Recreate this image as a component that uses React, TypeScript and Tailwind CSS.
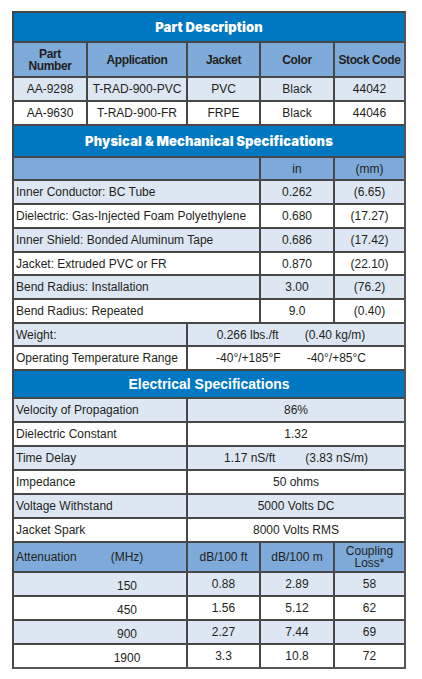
import React from 'react';

const line = 'border-[#474747]';

type Tone = 'light' | 'white' | 'mid';

const toneBg: Record<Tone, string> = {
    light: 'bg-[#dde7f4]',
    white: 'bg-white',
    mid: 'bg-[#7eaada]',
};

function Row({ cols, tone, h = 'h-[24px]', children }: { cols: string; tone: Tone; h?: string; children: React.ReactNode }) {
    return <div className={`grid ${cols} ${h} ${toneBg[tone]} border-t-2 ${line}`}>{children}</div>;
}

function Cell({ first, left, children, className = '' }: { first?: boolean; left?: boolean; children?: React.ReactNode; className?: string }) {
    return (
        <div
            className={`flex items-center ${left ? 'justify-start pl-[2px]' : 'justify-center text-center'} ${first ? '' : `border-l-2 ${line}`} ${className}`}
        >
            {children}
        </div>
    );
}

function SectionTitle({ children, heavy, h }: { children: React.ReactNode; heavy?: boolean; h: string }) {
    return (
        <div
            className={`${h} bg-[#0078c1] flex items-center justify-center text-white ${
                heavy ? "font-['Inter',sans-serif] font-black text-[13px] tracking-[0.1px]" : 'font-bold text-[14px]'
            }`}
        >
            {children}
        </div>
    );
}

const partCols = 'grid-cols-[72px_100px_73px_74px_1fr]';
const physCols = 'grid-cols-[245px_74px_1fr]';
const twoCols = 'grid-cols-[172px_1fr]';
const attCols = 'grid-cols-[172px_73px_74px_1fr]';

// label, in, mm, row height
const physRows: [string, string, string, string][] = [
    ['Inner Conductor: BC Tube', '0.262', '(6.65)', 'h-[24px]'],
    ['Dielectric: Gas-Injected Foam Polyethylene', '0.680', '(17.27)', 'h-[24px]'],
    ['Inner Shield: Bonded Aluminum Tape', '0.686', '(17.42)', 'h-[24px]'],
    ['Jacket: Extruded PVC or FR', '0.870', '(22.10)', 'h-[23px]'],
    ['Bend Radius: Installation', '3.00', '(76.2)', 'h-[24px]'],
    ['Bend Radius: Repeated', '9.0', '(0.40)', 'h-[24px]'],
];

const elecRows: [string, React.ReactNode][] = [
    ['Velocity of Propagation', '86%'],
    ['Dielectric Constant', '1.32'],
    [
        'Time Delay',
        <span className="flex gap-[30px]">
            <span>1.17 nS/ft</span>
            <span>(3.83 nS/m)</span>
        </span>,
    ],
    ['Impedance', '50 ohms'],
    ['Voltage Withstand', '5000 Volts DC'],
    ['Jacket Spark', '8000 Volts RMS'],
];

const attRows = [
    ['150', '0.88', '2.89', '58'],
    ['450', '1.56', '5.12', '62'],
    ['900', '2.27', '7.44', '69'],
    ['1900', '3.3', '10.8', '72'],
];

export default function App() {
    return (
        <div className="min-h-screen bg-white pt-[11px] pl-[12px] font-['Liberation_Sans',Arial,sans-serif] text-[12px] text-[#231f20] leading-none">
            <div className={`w-[394px] border-2 ${line} border-r-[#555] border-b-[#555]`}>
                {/* Part description */}
                <SectionTitle heavy h="h-[28px]">Part Description</SectionTitle>
                <Row cols={partCols} tone="mid" h="h-[35px]">
                    <Cell first className="font-bold tracking-[-0.4px] leading-[12px]">
                        Part
                        <br />
                        Number
                    </Cell>
                    <Cell className="font-bold tracking-[-0.4px]">Application</Cell>
                    <Cell className="font-bold tracking-[-0.4px]">Jacket</Cell>
                    <Cell className="font-bold tracking-[-0.4px]">Color</Cell>
                    <Cell className="font-bold tracking-[-0.4px]">Stock Code</Cell>
                </Row>
                <Row cols={partCols} tone="light">
                    <Cell first>AA-9298</Cell>
                    <Cell>T-RAD-900-PVC</Cell>
                    <Cell>PVC</Cell>
                    <Cell>Black</Cell>
                    <Cell>44042</Cell>
                </Row>
                <Row cols={partCols} tone="white">
                    <Cell first>AA-9630</Cell>
                    <Cell>T-RAD-900-FR</Cell>
                    <Cell>FRPE</Cell>
                    <Cell>Black</Cell>
                    <Cell>44046</Cell>
                </Row>

                {/* Physical & mechanical */}
                <div className={`border-t-2 ${line}`}>
                    <SectionTitle heavy h="h-[30px]">Physical &amp; Mechanical Specifications</SectionTitle>
                </div>
                <Row cols={physCols} tone="mid" h="h-[23px]">
                    <Cell first />
                    <Cell>in</Cell>
                    <Cell>(mm)</Cell>
                </Row>
                {physRows.map(([label, inch, mm, h], i) => (
                    <Row key={label} cols={physCols} tone={i % 2 === 0 ? 'light' : 'white'} h={h}>
                        <Cell first left>{label}</Cell>
                        <Cell>{inch}</Cell>
                        <Cell>{mm}</Cell>
                    </Row>
                ))}
                <Row cols={twoCols} tone="light" h="h-[23px]">
                    <Cell first left>Weight:</Cell>
                    <Cell>
                        <span className="flex gap-[26px] pr-[10px]">
                            <span>0.266 lbs./ft</span>
                            <span>(0.40 kg/m)</span>
                        </span>
                    </Cell>
                </Row>
                <Row cols={twoCols} tone="white">
                    <Cell first left>Operating Temperature Range</Cell>
                    <Cell>
                        <span className="flex gap-[26px] pr-[10px]">
                            <span>-40°/+185°F</span>
                            <span>-40°/+85°C</span>
                        </span>
                    </Cell>
                </Row>

                {/* Electrical */}
                <div className={`border-t-2 ${line}`}>
                    <SectionTitle h="h-[26px]">Electrical Specifications</SectionTitle>
                </div>
                {elecRows.map(([label, value], i) => (
                    <Row key={label} cols={twoCols} tone={i % 2 === 0 ? 'light' : 'white'}>
                        <Cell first left>{label}</Cell>
                        <Cell>{value}</Cell>
                    </Row>
                ))}
                <Row cols={attCols} tone="mid" h="h-[30px]">
                    <Cell first left>
                        <span className="w-[82px]">Attenuation</span>
                        <span className="w-[58px] text-center">(MHz)</span>
                    </Cell>
                    <Cell>dB/100 ft</Cell>
                    <Cell>dB/100 m</Cell>
                    <Cell className="leading-[12px]">
                        Coupling
                        <br />
                        Loss*
                    </Cell>
                </Row>
                {attRows.map(([mhz, ft, m, loss], i) => (
                    <Row key={mhz} cols={attCols} tone={i % 2 === 0 ? 'light' : 'white'}>
                        <Cell first left>
                            <span className="w-[82px]" />
                            <span className="w-[58px] text-center pt-[3px]">{mhz}</span>
                        </Cell>
                        <Cell>{ft}</Cell>
                        <Cell>{m}</Cell>
                        <Cell>{loss}</Cell>
                    </Row>
                ))}
            </div>
        </div>
    );
}
